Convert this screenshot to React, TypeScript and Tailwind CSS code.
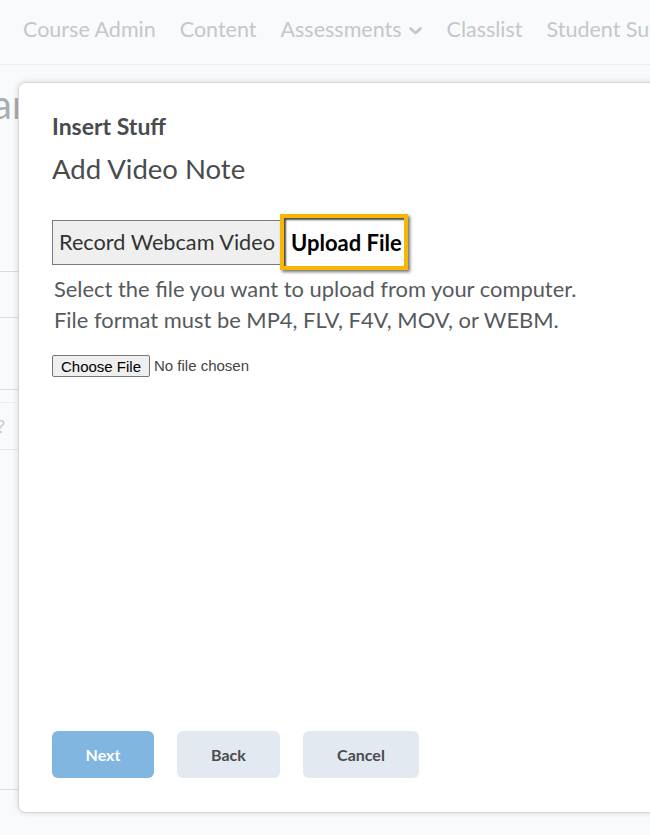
import React from "react";

export default function App() {
  return (
    <div className="relative w-[650px] h-[835px] overflow-hidden bg-[#f9fafc] font-['Lato','Noto_Sans',sans-serif]">
      {/* Top navigation */}
      <div className="h-[65px] border-b border-[#eceef2] flex items-center pb-[6px] pl-[23px] gap-[24px] text-[21.5px] text-[#c4c7cb] whitespace-nowrap">
        <span>Course Admin</span>
        <span>Content</span>
        <span className="flex items-center gap-[6px]">
          Assessments
          <svg width="15" height="10" viewBox="0 0 15 10" className="mt-[3px]">
            <path d="M2.5 2.5 L7.5 7 L12.5 2.5" fill="none" stroke="#c4c7cb" strokeWidth="2.8" strokeLinecap="round" strokeLinejoin="round" />
          </svg>
        </span>
        <span>Classlist</span>
        <span>Student Support</span>
      </div>

      {/* Background page content (behind dialog) */}
      <div className="flex flex-col">
        <div className="h-[68px] flex items-center -ml-[8px] text-[40px] text-[#a9adb2] leading-none pt-[10px]">ar</div>
        <div className="h-[138px]" />
        <div className="w-[20px] border-t border-[#d9dbde] h-[46px]" />
        <div className="w-[20px] border-t border-[#d9dbde] h-[72px]" />
        <div className="w-[20px] border-t border-[#d9dbde] h-[13px]" />
        <div className="w-[20px] border-t border-[#eceef0] h-[47px] text-[#c8cbcf] text-[18px] leading-none flex items-center -ml-[3px]">?</div>
        <div className="w-[20px] border-t border-[#e6e8eb] h-[340px]" />
        <div className="w-[20px] border-t border-[#d9dbde] h-[30px]" />
      </div>

      {/* Modal dialog */}
      <div className="absolute left-[18px] top-[82px] w-[700px] h-[731px] bg-white rounded-[8px] border border-[#d5d8dc] shadow-[0_0_6px_rgba(0,0,0,0.14)] flex flex-col pl-[33px] pt-[28px] pb-[34px] text-[#494c4e]">
        <div className="text-[23px] font-bold leading-[30px]">Insert Stuff</div>
        <div className="mt-[12px] text-[27.5px] leading-[32px]">Add Video Note</div>

        <div className="mt-[29px] flex items-center h-[56px]">
          <div className="h-[45px] w-[230px] border border-[#7a7a7a] bg-[#efefef] flex items-center pl-[6px] text-[21.7px] text-[#333333] whitespace-nowrap">
            Record Webcam Video
          </div>
          <div className="-ml-[2px] h-[56px] w-[128px] border-[4px] border-[#f8b700] bg-white shadow-[2px_2px_3px_rgba(0,0,0,0.55),inset_2px_2px_2px_rgba(0,0,0,0.7)] flex items-center pl-[7px] text-[22px] font-bold text-black whitespace-nowrap">
            Upload File
          </div>
        </div>

        <div className="mt-[3px] pl-[2px] text-[21.9px] leading-[31px] text-[#565a5c] whitespace-nowrap">
          <div>Select the file you want to upload from your computer.</div>
          <div>File format must be MP4, FLV, F4V, MOV, or WEBM.</div>
        </div>

        <div className="mt-[20px] flex items-center gap-[4px] font-['Liberation_Sans',Arial,sans-serif] text-[15px]">
          <button className="h-[22px] w-[98px] border border-[#767676] rounded-[2px] bg-[#efefef] text-black leading-none">
            Choose File
          </button>
          <span className="text-[#444]">No file chosen</span>
        </div>

        <div className="flex-1" />

        <div className="flex items-center gap-[23px] text-[16px] font-bold">
          <button className="h-[47px] w-[102px] rounded-[6px] bg-[#80b6df] text-white">Next</button>
          <button className="h-[47px] w-[103px] rounded-[6px] bg-[#e3e9f1] text-[#494c4e]">Back</button>
          <button className="h-[47px] w-[116px] rounded-[6px] bg-[#e3e9f1] text-[#494c4e]">Cancel</button>
        </div>
      </div>
    </div>
  );
}
